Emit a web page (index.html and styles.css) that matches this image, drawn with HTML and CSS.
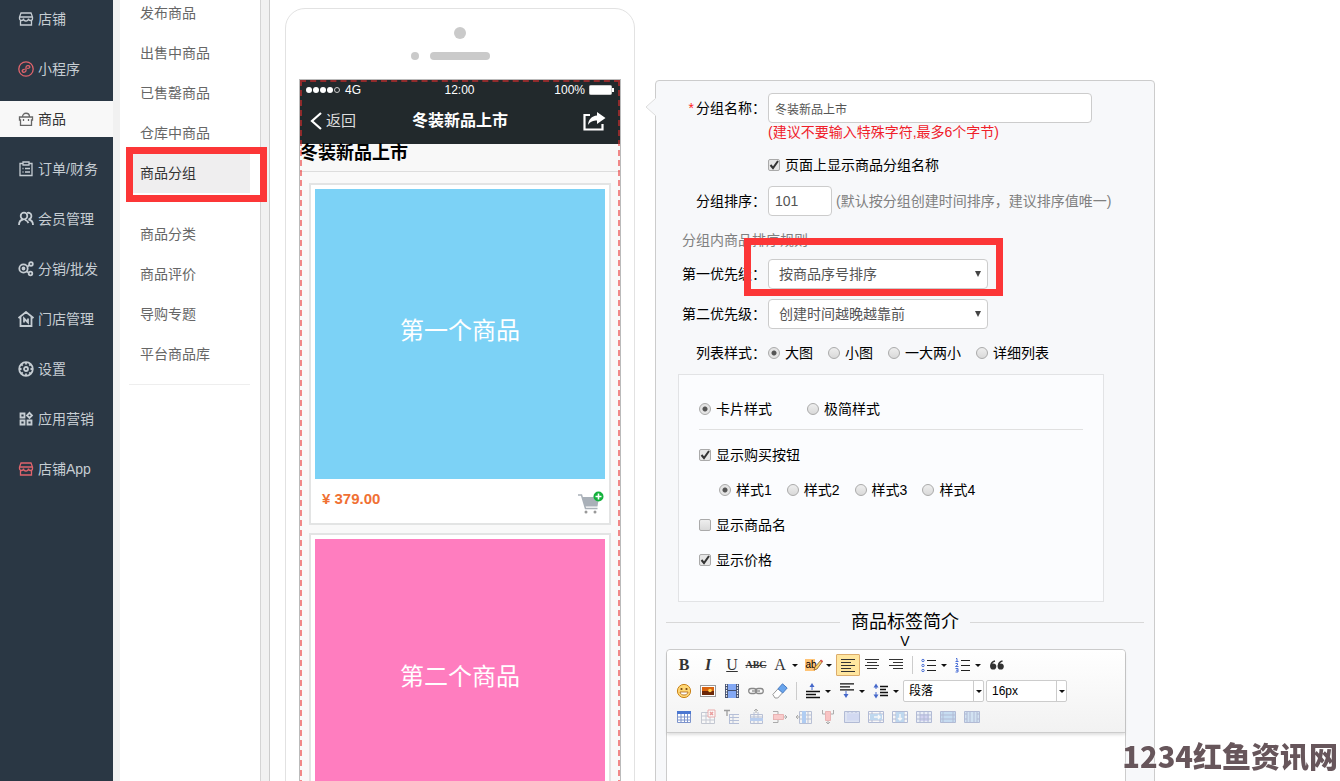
FILE: index.html
```html
<!DOCTYPE html>
<html lang="zh-CN">
<head>
<meta charset="utf-8">
<title>商品分组</title>
<link rel="stylesheet" href="styles.css">
</head>
<body>
<div class="app">
  <nav class="sidebar" aria-label="主导航">
    <a class="nav-item" href="#"><svg viewBox="0 0 16 16"><path d="M3 2h10l1.500 4v1.500a2 2 0 0 1-4 0 2.500 2.500 0 0 1-5 0 2 2 0 0 1-4 0V6zM1.500 6h13M2.500 9.500v4.500h11V9.500"/></svg>店铺</a>
    <a class="nav-item nav-red" href="#"><svg viewBox="0 0 16 16"><circle cx="8" cy="8" r="7.200"/><path d="M6.800 8.400c-2-.2-3 .9-2.500 2 .7 1.400 3.700 1 3.700-.8V6.200c0-1.800 3-2.200 3.700-.8.500 1.100-.5 2.200-2.500 2"/></svg>小程序</a>
    <a class="nav-item active" href="#"><svg viewBox="0 0 16 16"><path d="M1.500 6h13v3h-1v5.300h-11V9h-1zM4.500 6c0-5 7-5 7 0M5.500 8v2M10.500 8v2"/></svg>商品</a>
    <a class="nav-item" href="#"><svg viewBox="0 0 16 16"><path d="M5 2.500H2v12h12v-12h-3M5 1h6v3H5zM4.500 7.500h1M7 7.500h5M4.500 11h1M7 11h5"/></svg>订单/财务</a>
    <a class="nav-item bold" href="#"><svg viewBox="0 0 16 16"><circle cx="6" cy="5" r="3.300"/><path d="M1 14c0-3 1.500-5 4-5.500M9 2c5-1.500 6 5 1.500 6.500C13.500 9 15 11 15 14M7 9c2 .5 3 2 3.500 3"/></svg>会员管理</a>
    <a class="nav-item bold" href="#"><svg viewBox="0 0 16 16"><circle cx="5.500" cy="7.500" r="4.200"/><circle cx="5.500" cy="7.500" r="1"/><circle cx="13" cy="3" r="1.800"/><circle cx="12.500" cy="12.500" r="1.800"/><path d="m9.500 5.500 2-1.500M8.500 10.500l2 1"/></svg>分销/批发</a>
    <a class="nav-item bold" href="#"><svg viewBox="0 0 16 16"><path d="M.5 7 8 1l7.500 6M2.500 6v9h11V6M6 11.500V7.500l4 4V7.500"/></svg>门店管理</a>
    <a class="nav-item bold" href="#"><svg viewBox="0 0 16 16"><circle cx="8" cy="8" r="6.800"/><circle cx="8" cy="8" r="2"/><path d="M8 1v2.500M8 12.500V15M1 8h2.500M12.500 8H15M3 3l1.700 1.700M11.300 11.300 13 13M13 3l-1.700 1.700M4.700 11.300 3 13"/></svg>设置</a>
    <a class="nav-item bold" href="#"><svg viewBox="0 0 16 16"><path d="M2.500 2.500h4v4h-4zM2.500 9.500h4v4h-4zM9.500 9.500h4v4h-4zM11.500 1.800l2.500 2.700-2.500 2.500L9 4.500z"/></svg>应用营销</a>
    <a class="nav-item nav-red" href="#"><svg viewBox="0 0 16 16"><path d="M3 2h10l1.500 4v1.500a2 2 0 0 1-4 0 2.500 2.500 0 0 1-5 0 2 2 0 0 1-4 0V6zM1.500 6h13M2.500 9.500v4.500h11V9.500"/></svg>店铺App</a>
  </nav>

  <nav class="submenu" aria-label="商品菜单">
    <div class="submenu-group">
      <a href="#">发布商品</a>
      <a href="#">出售中商品</a>
      <a href="#">已售罄商品</a>
      <a href="#">仓库中商品</a>
      <a class="current" href="#">商品分组<span class="mark mark-menu"></span></a>
    </div>
    <div class="submenu-group">
      <a href="#">商品分类</a>
      <a href="#">商品评价</a>
      <a href="#">导购专题</a>
      <a href="#">平台商品库</a>
    </div>
  </nav>
  <div class="splitter"></div>

  <main class="workspace">
    <section class="phone" aria-label="预览">
      <div class="phone-top"><i class="camera"></i><div class="speaker"><i class="sensor"></i><i class="bar"></i></div></div>
      <div class="screen">
        <header class="phone-head">
          <div class="status">
            <span class="signal"><svg width="35" height="8" viewBox="0 0 35 8"><g fill="#fff"><circle cx="3" cy="4" r="3"/><circle cx="10" cy="4" r="3"/><circle cx="17" cy="4" r="3"/><circle cx="24" cy="4" r="3"/></g><circle cx="31" cy="4" r="2.500" fill="none" stroke="#ccc"/></svg>4G</span>
            <span>12:00</span>
            <span class="battery">100%<svg width="25" height="10" viewBox="0 0 25 10"><rect x=".5" y=".5" width="22" height="9" rx="1" fill="#fff" stroke="#ccc"/><path d="M24 3v4" stroke="#fff" stroke-width="2"/></svg></span>
          </div>
          <div class="navbar">
            <span class="back"><svg width="12" height="18" viewBox="0 0 12 18"><path d="M11 1 2 9l9 8" fill="none" stroke="#fff" stroke-width="2.200"/></svg>返回</span>
            <strong>冬装新品上市</strong>
            <span class="share"><svg width="23" height="19" viewBox="0 0 23 19"><path d="M7 3H1.500v14.500h18V12" fill="none" stroke="#fff" stroke-width="2.200"/><path d="M14 0l8.500 6L14 12V8.500c-4 0-6.500 1-9 4.500.5-5.500 3.500-9 9-9.500z" fill="#fff"/></svg></span>
          </div>
        </header>
        <h2 class="group-title">冬装新品上市</h2>
        <div class="cards">
          <article class="card">
            <div class="photo blue">第一个商品</div>
            <div class="card-foot"><span class="price">¥ 379.00</span>
              <svg width="28" height="26" viewBox="0 0 28 26"><path d="M1 5h3.500l4 13.500h12" fill="none" stroke="#a9b0b8" stroke-width="1.500"/><path d="M5 7h17l-1.500 9.500H8z" fill="#a9b0b8"/><circle cx="9" cy="22" r="1.500" fill="#999"/><circle cx="18" cy="22" r="1.500" fill="#999"/><circle cx="21.500" cy="6.500" r="5" fill="#12b13b"/><path d="M18.500 6.500h6M21.500 3.500v6" stroke="#fff" stroke-width="1.600"/></svg>
            </div>
          </article>
          <article class="card">
            <div class="photo pink">第二个商品</div>
            <div class="card-foot"></div>
          </article>
        </div>
      </div>
    </section>

    <form class="panel">
      <svg class="pointer" width="11" height="18" viewBox="0 0 11 18"><path d="M11 0 1 9l10 9z" fill="#f7f8fa"/><path d="M10.500.5 1 9l9.500 8.500" fill="none" stroke="#ddd"/></svg>
      <div class="row first"><label class="label" for="name"><span class="required">*</span>分组名称：</label><input class="text name" id="name" value="冬装新品上市"></div>
      <p class="hint red">(建议不要输入特殊字符,最多6个字节)</p>
      <label class="choice show-name"><input type="checkbox" checked>页面上显示商品分组名称</label>
      <div class="row order"><label class="label" for="order">分组排序：</label><input class="text num" id="order" value="101"><span class="hint">(默认按分组创建时间排序，建议排序值唯一)</span></div>
      <p class="rule">分组内商品排序规则</p>
      <div class="row priority"><label class="label" for="p1">第一优先级：</label><span class="select"><select id="p1"><option>按商品序号排序</option></select><span class="mark mark-select"></span></span></div>
      <div class="row priority"><label class="label" for="p2">第二优先级：</label><span class="select"><select id="p2"><option>创建时间越晚越靠前</option></select></span></div>
      <div class="row styles"><span class="label">列表样式：</span>
        <div class="choices">
          <label class="choice"><input type="radio" name="list" checked>大图</label>
          <label class="choice"><input type="radio" name="list">小图</label>
          <label class="choice"><input type="radio" name="list">一大两小</label>
          <label class="choice"><input type="radio" name="list">详细列表</label>
        </div>
      </div>
      <div class="box">
        <div class="choices wide">
          <label class="choice"><input type="radio" name="card" checked>卡片样式</label>
          <label class="choice"><input type="radio" name="card">极简样式</label>
        </div>
        <label class="choice"><input type="checkbox" checked>显示购买按钮</label>
        <div class="choices nested">
          <label class="choice"><input type="radio" name="buy" checked>样式1</label>
          <label class="choice"><input type="radio" name="buy">样式2</label>
          <label class="choice"><input type="radio" name="buy">样式3</label>
          <label class="choice"><input type="radio" name="buy">样式4</label>
        </div>
        <label class="choice"><input type="checkbox">显示商品名</label>
        <label class="choice"><input type="checkbox" checked>显示价格</label>
      </div>
      <h3 class="divider">商品标签简介</h3>
      <p class="fold">V</p>

      <div class="editor">
        <div class="toolbar">
          <div class="tools">
            <button type="button" class="tool glyph" aria-label="加粗"><b>B</b></button>
            <button type="button" class="tool glyph" aria-label="斜体"><b><i>I</i></b></button>
            <button type="button" class="tool glyph" aria-label="下划线"><u>U</u></button>
            <button type="button" class="tool glyph small" aria-label="删除线"><s>ABC</s></button>
            <button type="button" class="tool glyph split" aria-label="字体颜色"><span>A</span></button>
            <button type="button" class="tool split" aria-label="背景色"><span class="highlight">ab<svg width="10" height="12" viewBox="0 0 10 12"><path d="m1 11 1-3 6-7 1.500 1.500L4 10z" fill="#f6d36b" stroke="#8b5a2b" stroke-width=".8"/><path d="m7 2 1-1.500 2 1.500-1 1.500z" fill="#d55"/></svg></span></button>
            <button type="button" class="tool on" aria-label="左对齐"><svg viewBox="0 0 16 16"><path d="M1 2.500h14M1 5.500h10M1 8.500h14M1 11.500h10M1 14.500h14" stroke="#333"/></svg></button>
            <button type="button" class="tool" aria-label="居中"><svg viewBox="0 0 16 16"><path d="M1 2.500h14M3 5.500h10M1 8.500h14M3 11.500h10" stroke="#333"/></svg></button>
            <button type="button" class="tool" aria-label="右对齐"><svg viewBox="0 0 16 16"><path d="M1 2.500h14M5 5.500h10M1 8.500h14M5 11.500h10" stroke="#333"/></svg></button>
            <i class="sep"></i>
            <button type="button" class="tool split" aria-label="无序列表"><svg viewBox="0 0 16 16"><path d="M6 3.500h9M6 8.500h9M6 13.500h9" stroke="#222"/><g fill="#fff" stroke="#4a6fd6"><circle cx="2" cy="3.500" r="1.200"/><circle cx="2" cy="8.500" r="1.200"/><circle cx="2" cy="13.500" r="1.200"/></g></svg></button>
            <button type="button" class="tool split" aria-label="有序列表"><svg viewBox="0 0 16 16"><path d="M6 3.500h9M6 8.500h9M6 13.500h9" stroke="#222"/><path d="M1 1.500h1v3M.5 4.500h3M.5 6.500h2v1.500l-2 1.500h3M.5 11.500h2.500v3.500H.5M1 13.200h2" fill="none" stroke="#4a6fd6"/></svg></button>
            <button type="button" class="tool" aria-label="引用"><svg viewBox="0 0 16 16"><g fill="#333"><circle cx="4.200" cy="9.500" r="3.100"/><circle cx="11.700" cy="9.500" r="3.100"/></g><path d="M2 9c0-3 1.500-4.500 4-5M9.500 9c0-3 1.500-4.500 4-5" fill="none" stroke="#333" stroke-width="1.600"/></svg></button>
          </div>
          <div class="tools">
            <button type="button" class="tool" aria-label="表情"><svg viewBox="0 0 16 16"><circle cx="8" cy="8" r="6.600" fill="#ffd774" stroke="#c98219"/><circle cx="5.500" cy="6" r="1.100" fill="#754511"/><circle cx="10.500" cy="6" r="1.100" fill="#754511"/><path d="M4 9h8c-.5 4-7.500 4-8 0z" fill="#fff" stroke="#a8621a" stroke-width=".8"/></svg></button>
            <button type="button" class="tool" aria-label="图片"><svg viewBox="0 0 16 16"><rect x=".5" y="2.500" width="15" height="11" fill="#fff" stroke="#999"/><path d="M2 4h12v5H2z" fill="#d8630f"/><path d="M2 8h12v4H2z" fill="#6b2708"/><circle cx="10" cy="7.500" r="1.800" fill="#ffd34d"/></svg></button>
            <button type="button" class="tool" aria-label="视频"><svg viewBox="0 0 16 16"><path d="M1 1h14v14H1z" fill="#44506e"/><path d="M4 1h8v6H4zM4 8h8v7H4z" fill="#83a8f4"/><path d="M2.500 1.500v13M13.500 1.500v13" stroke="#fff" stroke-width="1.200" stroke-dasharray="1.500 1.200"/></svg></button>
            <button type="button" class="tool" aria-label="链接"><svg viewBox="0 0 16 16"><g fill="none" stroke="#888" stroke-width="1.300"><rect x=".7" y="5.500" width="7.500" height="5" rx="2.500"/><rect x="7.800" y="5.500" width="7.500" height="5" rx="2.500"/><path d="M4 8h8"/></g></svg></button>
            <button type="button" class="tool" aria-label="清除格式"><svg viewBox="0 0 16 16"><path d="m.8 11.500 5.500-6 4.500 4-5 5.500H3z" fill="#fff" stroke="#999"/><path d="m6 5.800 4.500-5 4.700 4.200-4.500 5z" fill="#69a5ed" stroke="#4a7bc0"/></svg></button>
            <i class="sep"></i>
            <button type="button" class="tool split" aria-label="段前距"><svg viewBox="0 0 16 16"><path d="M1 8.500h14M1 11.500h10M1 14.500h14" stroke="#111" stroke-width="1.300"/><path d="M7 7V3" stroke="#4467ca"/><path d="m4.500 4 2.500-4 2.500 4z" fill="#4467ca"/></svg></button>
            <button type="button" class="tool split" aria-label="段后距"><svg viewBox="0 0 16 16"><path d="M1 .8h14M1 3.800h10M1 6.800h14" stroke="#111" stroke-width="1.300"/><path d="M7 8v4" stroke="#4467ca"/><path d="m4.500 11 2.500 4 2.500-4z" fill="#4467ca"/></svg></button>
            <button type="button" class="tool split" aria-label="行距"><svg viewBox="0 0 16 16"><path d="M7 3.500h8M7 6.500h6M7 9.500h8M7 12.500h8" stroke="#111" stroke-width="1.300"/><path d="M3 3v3M3 9v4" stroke="#4467ca"/><path d="M.5 4.500 3 .5l2.500 4zM.5 11.500l2.500 4 2.500-4z" fill="#4467ca"/></svg></button>
            <span class="combo"><select aria-label="段落格式"><option>段落</option></select></span>
            <span class="combo"><select aria-label="字号"><option>16px</option></select></span>
          </div>
          <div class="tools">
            <button type="button" class="tool" aria-label="插入表格"><svg viewBox="0 0 16 16"><path d="M1.500 2.500h13v11h-13zM1.500 8h13M1.500 11h13M5 5v8M8.500 5v8M11.500 5v8" fill="#fff" stroke="#7d94cc"/><path d="M1 2h14v3H1z" fill="#4b77d1"/></svg></button>
            <button type="button" class="tool off" aria-label="删除表格"><svg viewBox="0 0 16 16"><path d="M1.500 3.500h13v11h-13zM1.500 7h13M1.500 11h13M6 3v11M10 3v11" fill="#fff" stroke="#8b93a8"/><path d="M8 1h7v7H8z" fill="#fff" stroke="#d55"/><path d="m10 3 3 3m0-3-3 3" stroke="#d33" stroke-width="1.500"/></svg></button>
            <button type="button" class="tool off" aria-label="表格标题"><svg viewBox="0 0 16 16"><path d="M0 1.500h6M3 1v6" stroke="#333" stroke-width="1.300"/><path d="M5 5.500h10M5 8.500h10M5 11.500h10M5 14.500h10M5.500 5v9.500M9 5v9.500" stroke="#6b80b5"/></svg></button>
            <button type="button" class="tool off" aria-label="插入行"><svg viewBox="0 0 16 16"><path d="M2.500 5.500h12v9h-12zM6 3v12M10 3v12M2 8h13" fill="none" stroke="#7082b0"/><path d="M2 9h13v3H2z" fill="#719fe8"/><path d="M8 4V0M6 2l2-2 2 2" fill="none" stroke="#555"/></svg></button>
            <button type="button" class="tool off" aria-label="删除行"><svg viewBox="0 0 16 16"><path d="M1 2.500h5v3H1M1 13.500h5v-3H1M11 8h4m-2-2 2 2-2 2" fill="none" stroke="#555"/><path d="M1.500 5.500h10v5h-10z" fill="#ff9a9a" stroke="#d66"/></svg></button>
            <button type="button" class="tool off" aria-label="插入列"><svg viewBox="0 0 16 16"><path d="M3.500 2.500h12v12h-12zM3 6h12M3 10h12M8 2v12M12 2v12" fill="none" stroke="#7082b0"/><path d="M6 2h4v12H6z" fill="#5e9df0"/><path d="M4 8H0m2-2L0 8l2 2" fill="none" stroke="#555"/></svg></button>
            <button type="button" class="tool off" aria-label="删除列"><svg viewBox="0 0 16 16"><path d="M2.500 1v4h3M13.500 1v4h-3M8 11v4m-2-2 2 2 2-2" fill="none" stroke="#555"/><path d="M5.500 2.500h5v9h-5z" fill="#ff8a8a" stroke="#d66"/></svg></button>
            <button type="button" class="tool off" aria-label="合并单元格"><svg viewBox="0 0 16 16"><path d="M.5 2.500h15v11H.5zM4 2v2M8 2v2M12 2v2" fill="#c3d0f0" stroke="#6377b0"/><path d="M3 4.500h12v7H3z" fill="#a9b9ee"/></svg></button>
            <button type="button" class="tool off" aria-label="右合并"><svg viewBox="0 0 16 16"><path d="M.5 2.500h15v11H.5zM4 2v11M12 2v11M1 5h14M1 11h14" fill="#fff" stroke="#6377b0"/><path d="M2 5h12v6H2z" fill="#7fb5e8"/><path d="M6 8h6m-2-2 2 2-2 2" fill="none" stroke="#fff" stroke-width="1.400"/></svg></button>
            <button type="button" class="tool off" aria-label="下合并"><svg viewBox="0 0 16 16"><path d="M.5 2.500h15v11H.5zM4 2v11M12 2v11M1 6h14M1 10h14" fill="#fff" stroke="#6377b0"/><path d="M4 3h8v10H4z" fill="#7fb5e8"/><path d="M8 5v6m-2-2 2 2 2-2" fill="none" stroke="#fff" stroke-width="1.400"/></svg></button>
            <button type="button" class="tool off" aria-label="拆分单元格"><svg viewBox="0 0 16 16"><path d="M.5 2.500h15v11H.5z" fill="#dbe6fa"/><path d="M4 5h9v7H4z" fill="#a9a9ee"/><path d="M.5 2.500h15v11H.5zM4 2v11M8 2v11M12 2v11M1 6h14M1 10h14" fill="none" stroke="#6377b0"/></svg></button>
            <button type="button" class="tool off" aria-label="拆分行"><svg viewBox="0 0 16 16"><path d="M.5 2.500h15v11H.5zM1 6h14M1 10h14M3 2v11M13 2v11" fill="#8fc0ee" stroke="#6377b0"/></svg></button>
            <button type="button" class="tool off" aria-label="拆分列"><svg viewBox="0 0 16 16"><path d="M.5 2.500h15v11H.5zM3 2v11M6 2v11M10 2v11M13 2v11M1 5h2M1 10h2M13 5h2M13 10h2" fill="#a8cdf0" stroke="#6377b0"/></svg></button>
          </div>
        </div>
        <div class="editor-body"></div>
      </div>
    </form>
  </main>
</div>
<div class="watermark">1234红鱼资讯网</div>
</body>
</html>
```

FILE: styles.css
```css
* { box-sizing: border-box; }
body, p, h2, h3 { margin: 0; }
body {
  font: 14px/20px "Liberation Sans", "Noto Sans CJK SC", sans-serif;
  color: #000;
  background: #fff;
}
a { color: inherit; text-decoration: none; }
input, select, button { font: inherit; margin: 0; }
.app { display: flex; height: 100vh; overflow: hidden; }

/* navigation */
.sidebar {
  flex: 0 0 113px;
  display: flex;
  flex-direction: column;
  gap: 14px;
  padding-top: 1px;
  background: #2a3744;
}
.nav-item {
  display: flex;
  flex: 0 0 36px;
  align-items: center;
  gap: 4px;
  padding-left: 18px;
  color: #c6cdd3;
  white-space: nowrap;
}
.nav-item svg { flex: none; width: 16px; height: 16px; fill: none; stroke: currentColor; stroke-width: 1.3; }
.nav-item.bold svg { stroke-width: 1.8; }
.nav-item.nav-red svg { stroke: #e0646c; }
.nav-item.active { background: #f8f8f8; color: #333; }
.nav-item.active svg { stroke: #666; }
.submenu {
  flex: 0 0 148px;
  border-left: 7px solid #f1f1f1;
  border-right: 1px solid #d4d4d4;
  padding: 0 10px 0 9px;
}
.submenu-group { display: flex; flex-direction: column; margin-bottom: 21px; }
.submenu-group:first-child { margin-top: -7px; }
.submenu-group:last-child { border-bottom: 1px solid #eee; padding-bottom: 10px; }
.submenu a { position: relative; line-height: 40px; padding-left: 11px; color: #666; }
.submenu .current { background: #efeeef; color: #333; }
.splitter { flex: 0 0 9px; background: #f1f1f1; border-right: 1px solid #ccc; }

/* red call-out frames */
.mark { position: absolute; border: 7px solid #fc3637; pointer-events: none; z-index: 2; }
.mark-menu { left: -3px; top: -6px; width: 141px; height: 55px; }
.mark-select { left: -24px; top: -21px; width: 259px; height: 58px; }

.workspace { flex: 1; display: flex; align-items: flex-start; gap: 20px; padding: 8px 15px 0; min-width: 0; }

/* phone preview */
.phone { flex: 0 0 350px; border: 1px solid #e2e2e2; border-radius: 20px; padding: 18px 13px 40px; }
.phone-top { display: flex; flex-direction: column; align-items: center; gap: 13px; padding-bottom: 19px; }
.camera, .sensor, .bar { display: block; background: #cacaca; }
.camera { width: 12px; height: 12px; border-radius: 6px; }
.speaker { display: flex; gap: 11px; padding-right: 19px; }
.sensor { width: 8px; height: 8px; border-radius: 4px; }
.bar { width: 60px; height: 8px; border-radius: 4px; }
.screen { position: relative; border: 1px solid #bbb; background: #f9f9f9; }
.screen::after { content: ""; position: absolute; inset: 0; border: 2px dashed rgba(235, 45, 45, .55); pointer-events: none; }
.phone-head { background: #22292c; color: #fff; height: 64px; }
.status { display: grid; grid-template-columns: 1fr auto 1fr; font-size: 12px; padding: 0 6px 0 5px; }
.signal, .battery { display: flex; align-items: center; gap: 4px; }
.signal { padding-left: 1px; }
.battery { justify-content: flex-end; }
.navbar { display: grid; grid-template-columns: 1fr auto 1fr; align-items: center; height: 42px; padding: 0 10px; }
.navbar strong { font-size: 16px; }
.back { display: flex; align-items: center; gap: 4px; font-size: 15px; color: #ddd; }
.share { display: flex; justify-content: flex-end; padding-right: 4px; }
.group-title { height: 28px; border-bottom: 1px solid #ddd; background: #f8f8f8; font-size: 18px; line-height: 18px; font-weight: 700; }
.cards { display: flex; flex-direction: column; gap: 8px; padding: 11px 9px; }
.card { border: 2px solid #e3e4e4; background: #fff; padding: 4px; }
.photo { display: flex; align-items: center; justify-content: center; aspect-ratio: 1; color: #fff; font-size: 24px; }
.blue { background: #7cd2f6; padding-bottom: 7px; }
.pink { background: #ff7dbf; padding-bottom: 14px; }
.card-foot { display: flex; justify-content: space-between; align-items: center; height: 40px; padding-left: 7px; }
.card-foot svg { margin-top: 8px; }
.price { color: #f07033; font-weight: 700; font-size: 15px; }

/* settings panel */
.panel {
  position: relative;
  flex: 0 1 500px;
  min-height: 100vh;
  margin-top: 72px;
  padding: 12px 10px 0;
  border: 1px solid #ccc;
  border-radius: 4px;
  background: #f7f8fa;
}
.pointer { position: absolute; left: -11px; top: 17px; }
.row { display: flex; align-items: center; }
.label { flex: 0 0 102px; text-align: right; white-space: nowrap; padding-right: 2px; }
.required { color: #f22; padding-right: 2px; }
.text { height: 30px; border: 1px solid #ccc; border-radius: 4px; background: #fff; color: #555; padding: 0 6px; }
.name { flex: 0 1 324px; min-width: 0; font-size: 12px; }
.num { width: 64px; font-size: 14px; }
.hint { color: #808080; white-space: nowrap; }
.row .hint { padding-left: 4px; }
.hint.red { color: #f0202a; line-height: 19px; padding-left: 102px; }
.choice { display: flex; align-items: center; gap: 5px; white-space: nowrap; }
.show-name { margin: 13px 0 11px 102px; }
.rule { color: #808080; margin: 14px 0 9px; padding-left: 16px; }
.priority { margin-bottom: 10px; }
.select { position: relative; flex: 0 1 220px; }
.select select {
  appearance: none;
  display: block;
  width: 100%;
  height: 30px;
  padding: 0 10px;
  border: 1px solid #ccc;
  border-radius: 4px;
  background: #fff;
  color: #555;
}
.select::after, .combo::after, .split::after {
  content: "";
  position: absolute;
  border: solid transparent;
  border-top-color: #111;
  pointer-events: none;
}
.select::after { right: 7px; top: 12px; border-width: 6px 3px 0; border-top-color: #444; }
.styles { margin: 14px 0 11px; }
.choices { display: flex; gap: 15px; }
input[type="radio"], input[type="checkbox"] {
  appearance: none;
  flex: none;
  width: 12px;
  height: 12px;
  border: 1px solid #aaa;
  border-radius: 2px;
  background: linear-gradient(#eee, #d9d9d9);
}
input[type="radio"] { border-radius: 6px; }
input[type="radio"]:checked { background: radial-gradient(circle, #555 0 2px, #e4e4e4 3px); }
input[type="checkbox"]:checked {
  background: #e6e6e6 url("data:image/svg+xml,%3Csvg xmlns='http://www.w3.org/2000/svg' viewBox='0 0 10 10'%3E%3Cpath d='M1.500 5l2.500 3 5-7' fill='none' stroke='%23333' stroke-width='2'/%3E%3C/svg%3E") center / 10px;
}
.box {
  display: flex;
  flex-direction: column;
  gap: 15px;
  margin: 0 40px 8px 12px;
  padding: 24px 20px 31px;
  border: 1px solid #e2e3e5;
  background: #fbfcfe;
}
.wide { gap: 35px; padding-bottom: 10px; border-bottom: 1px solid #e0e0e0; }
.nested { padding-left: 20px; }
.divider { display: flex; align-items: center; gap: 11px; font-size: 18px; line-height: 24px; font-weight: 400; white-space: nowrap; }
.divider::before, .divider::after { content: ""; flex: 1; height: 1px; background: #d8d8d8; }
.fold { text-align: center; line-height: 15px; }

/* rich text editor */
.editor { width: 460px; max-width: 100%; border: 1px solid #ccc; border-radius: 4px 4px 0 0; background: #fff; }
.toolbar {
  display: flex;
  flex-direction: column;
  gap: 4px;
  padding: 4px 5px;
  border-bottom: 1px solid #ccc;
  border-radius: 4px 4px 0 0;
  background: linear-gradient(#fff, #f2f2f2);
  box-shadow: 0 2px 3px rgba(0, 0, 0, .12);
}
.tools { display: flex; align-items: center; height: 22px; }
.tool {
  position: relative;
  display: flex;
  align-items: center;
  justify-content: center;
  flex: 0 0 24px;
  height: 22px;
  padding: 0;
  border: 1px solid transparent;
  border-radius: 1px;
  background: none;
  color: #333;
}
.tool > svg { width: 16px; height: 16px; fill: none; }
.tool.on { background: #ffe69f; border-color: #dcac6c; }
.tool.off svg { opacity: .45; }
.tool.split { flex-basis: 34px; padding-right: 10px; }
.split::after { right: 3px; top: 9px; border-width: 3px 3px 0; }
.glyph { font-family: "Liberation Serif", serif; font-size: 16px; }
.glyph.small { font-size: 10px; font-weight: 700; }
.highlight { display: flex; font-size: 10px; line-height: 11px; color: #000; background: linear-gradient(90deg, #ffc476 10px, transparent 10px); }
.highlight svg { flex: none; margin-left: -4px; }
.sep { flex: 0 0 9px; height: 18px; background: linear-gradient(#ccc, #ccc) center / 1px 100% no-repeat; }
.combo { position: relative; flex: 0 0 81px; margin-right: 2px; }
.combo select {
  appearance: none;
  display: block;
  width: 100%;
  height: 22px;
  padding: 0 5px;
  border: 1px solid #ccc;
  border-radius: 2px;
  background: linear-gradient(90deg, #ccc, #ccc) right 9px top / 1px 100% no-repeat, #fff;
  font-size: 12px;
  color: #000;
}
.combo::after { right: 2px; top: 10px; border-width: 3px 3px 0; }
.editor-body { height: 300px; }

.watermark {
  position: fixed;
  right: 2px;
  bottom: 6px;
  font: 900 29px/40px "Noto Sans CJK SC", sans-serif;
  color: #67565b;
  text-shadow: 0 0 2px #fff, 0 0 2px #fff;
}
```
